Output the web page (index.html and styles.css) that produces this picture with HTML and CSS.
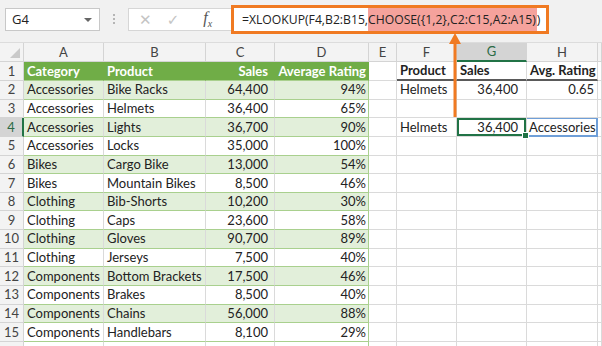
FILE: index.html
```html
<!DOCTYPE html>
<html lang="en">
<head>
  <meta charset="UTF-8">
  <title>XLOOKUP CHOOSE</title>
  <link rel="stylesheet" href="styles.css">
</head>
<body>

  <div class="toolbar">
    <div class="namebox">G4<span class="caret"></span></div>
    <div class="grip"><i></i><i></i><i></i></div>
    <div class="buttons">
      <span class="btn cancel">✕</span>
      <span class="btn enter">✓</span>
      <span class="btn fx">f<sub>x</sub></span>
    </div>
    <div class="formula">=XLOOKUP(F4,B2:B15,<span class="hl">CHOOSE({1,2},C2:C15,A2:A15)</span>)</div>
  </div>

  <svg class="arrow" width="14" height="84" viewBox="0 0 14 84">
    <polygon points="7,0 13,11 1,11" fill="#f07a22"/>
    <rect x="5.5" y="9" width="3" height="75" fill="#f07a22"/>
  </svg>

  <table class="sheet">
    <colgroup>
      <col class="w-row"><col class="w-a"><col class="w-b"><col class="w-c"><col class="w-d">
      <col class="w-e"><col class="w-f"><col class="w-g"><col class="w-h"><col>
    </colgroup>
    <thead>
      <tr>
        <th class="corner"><span class="tri"></span></th>
        <th>A</th><th>B</th><th>C</th><th>D</th><th>E</th><th>F</th><th class="active">G</th><th>H</th><th></th>
      </tr>
    </thead>
    <tbody>
      <tr class="top">
        <th>1</th><td>Category</td><td>Product</td><td class="n">Sales</td><td class="p">Average Rating</td>
        <td></td><td class="lh">Product</td><td class="lh">Sales</td><td class="lh">Avg. Rating</td><td></td>
      </tr>
      <tr class="band">
        <th>2</th><td>Accessories</td><td>Bike Racks</td><td class="n">64,400</td><td class="p">94%</td>
        <td></td><td class="f">Helmets</td><td class="g">36,400</td><td class="h">0.65</td><td></td>
      </tr>
      <tr>
        <th>3</th><td>Accessories</td><td>Helmets</td><td class="n">36,400</td><td class="p">65%</td>
        <td></td><td></td><td></td><td></td><td></td>
      </tr>
      <tr class="band">
        <th class="active">4</th><td>Accessories</td><td>Lights</td><td class="n">36,700</td><td class="p">90%</td>
        <td></td><td class="f">Helmets</td><td class="g sel">36,400</td><td class="spill">Accessories</td><td></td>
      </tr>
      <tr>
        <th>5</th><td>Accessories</td><td>Locks</td><td class="n">35,000</td><td class="p">100%</td>
        <td></td><td></td><td></td><td></td><td></td>
      </tr>
      <tr class="band">
        <th>6</th><td>Bikes</td><td>Cargo Bike</td><td class="n">13,000</td><td class="p">54%</td>
        <td></td><td></td><td></td><td></td><td></td>
      </tr>
      <tr>
        <th>7</th><td>Bikes</td><td>Mountain Bikes</td><td class="n">8,500</td><td class="p">46%</td>
        <td></td><td></td><td></td><td></td><td></td>
      </tr>
      <tr class="band">
        <th>8</th><td>Clothing</td><td>Bib-Shorts</td><td class="n">10,200</td><td class="p">30%</td>
        <td></td><td></td><td></td><td></td><td></td>
      </tr>
      <tr>
        <th>9</th><td>Clothing</td><td>Caps</td><td class="n">23,600</td><td class="p">58%</td>
        <td></td><td></td><td></td><td></td><td></td>
      </tr>
      <tr class="band">
        <th>10</th><td>Clothing</td><td>Gloves</td><td class="n">90,700</td><td class="p">89%</td>
        <td></td><td></td><td></td><td></td><td></td>
      </tr>
      <tr>
        <th>11</th><td>Clothing</td><td>Jerseys</td><td class="n">7,500</td><td class="p">40%</td>
        <td></td><td></td><td></td><td></td><td></td>
      </tr>
      <tr class="band">
        <th>12</th><td>Components</td><td>Bottom Brackets</td><td class="n">17,500</td><td class="p">46%</td>
        <td></td><td></td><td></td><td></td><td></td>
      </tr>
      <tr>
        <th>13</th><td>Components</td><td>Brakes</td><td class="n">8,500</td><td class="p">40%</td>
        <td></td><td></td><td></td><td></td><td></td>
      </tr>
      <tr class="band">
        <th>14</th><td>Components</td><td>Chains</td><td class="n">56,000</td><td class="p">88%</td>
        <td></td><td></td><td></td><td></td><td></td>
      </tr>
      <tr>
        <th>15</th><td>Components</td><td>Handlebars</td><td class="n">8,100</td><td class="p">29%</td>
        <td></td><td></td><td></td><td></td><td></td>
      </tr>
      <tr class="last">
        <th></th><td></td><td></td><td></td><td></td>
        <td></td><td></td><td></td><td></td><td></td>
      </tr>
    </tbody>
  </table>

</body>
</html>
```

FILE: styles.css
```css
body {
  margin: 0;
  width: 602px;
  height: 346px;
  overflow: hidden;
  background: #fff;
  font-family: Lato, "Liberation Sans", sans-serif;
  position: relative;
}

/* formula bar */
.toolbar {
  height: 43px;
  background: #f1f1f1;
  display: flex;
  align-items: flex-start;
  box-sizing: border-box;
  border-bottom: 1px solid #dcdcdc;
}
.namebox {
  margin: 8px 0 0 5px;
  width: 95px;
  height: 23px;
  box-sizing: border-box;
  background: #fff;
  border: 1px solid #c8c8c8;
  font: 13px "Open Sans", sans-serif;
  color: #222;
  line-height: 21px;
  padding-left: 6px;
  position: relative;
}
.caret {
  position: absolute;
  right: 7px;
  top: 9px;
  border-left: 4px solid transparent;
  border-right: 4px solid transparent;
  border-top: 4px solid #666;
}
.grip {
  width: 28px;
  display: flex;
  flex-direction: column;
  align-items: center;
  gap: 2px;
  padding-top: 14px;
}
.grip i {
  width: 2px;
  height: 2px;
  background: #b5b5b5;
}
.buttons {
  margin-top: 8px;
  width: 103px;
  height: 23px;
  box-sizing: border-box;
  background: #fff;
  border: 1px solid #d6d6d6;
  border-right: none;
  display: flex;
  align-items: center;
  padding-left: 10px;
}
.btn {
  width: 35px;
  font: 15px "DejaVu Sans", sans-serif;
  color: #c4c4c4;
}
.btn.fx {
  font: italic 16px "Liberation Serif", serif;
  color: #555;
  padding-left: 9px;
}
.btn.fx sub { font-size: 10px; }
.formula {
  margin-top: 5px;
  width: 318px;
  height: 29px;
  box-sizing: border-box;
  background: #fff;
  border: 3px solid #f07a22;
  font: 12.2px "Open Sans", sans-serif;
  color: #222;
  line-height: 23px;
  padding-left: 8px;
  white-space: nowrap;
  overflow: hidden;
}
.hl {
  background: #f5a29c;
  display: inline-block;
  padding-right: 1px;
}

.arrow {
  position: absolute;
  left: 448px;
  top: 33px;
}

/* grid */
.sheet {
  border-collapse: separate;
  border-spacing: 0;
  table-layout: fixed;
  width: 602px;
  font-size: 13px;
  color: #222;
}
.w-row { width: 24px; }
.w-a { width: 80px; }
.w-b { width: 102px; }
.w-c { width: 69px; }
.w-d { width: 94px; }
.w-e { width: 28px; }
.w-f { width: 60px; }
.w-g { width: 70px; }
.w-h { width: 71px; }

.sheet th,
.sheet td {
  box-sizing: border-box;
  padding: 0 0 0 3px;
  border-right: 1px solid #dadada;
  border-bottom: 1px solid #dadada;
  white-space: nowrap;
  overflow: hidden;
  height: 18.65px;
  line-height: 17px;
}
.sheet thead th {
  height: 17px;
  background: #f3f3f3;
  font-weight: normal;
  color: #444;
  text-align: center;
  padding: 0;
  border-color: #d4d4d4;
}
.sheet tbody th {
  background: #f3f3f3;
  font-weight: normal;
  color: #444;
  text-align: center;
  padding: 0;
  border-color: #d4d4d4;
}
.sheet thead th.active {
  background: #d4d4d4;
  color: #2b6a45;
  border-bottom: 2px solid #217346;
}
.sheet tbody th.active {
  background: #d4d4d4;
  color: #2b6a45;
  border-right: 2px solid #217346;
}
.corner { position: relative; }
.tri {
  position: absolute;
  right: 3px;
  bottom: 3px;
  border-left: 10px solid transparent;
  border-bottom: 10px solid #c9c9c9;
}

/* data table A:D */
.sheet tbody tr td:nth-child(-n+5) { border-bottom-color: #a9d08e; }
.sheet tbody tr td:nth-child(5) { border-right-color: #a9d08e; }
.sheet tr.band td:nth-child(-n+5) { background: #e2efda; }
.sheet tr.top td:nth-child(-n+5) {
  background: #70ad47;
  color: #fff;
  font-weight: bold;
  border-right-color: #70ad47;
}
.sheet tr.last td { border-bottom: none; }
.sheet tr.last th { border-bottom: none; }
.sheet td.n { text-align: right; padding: 0 6px 0 0; }
.sheet td.p { text-align: right; padding: 0 2px 0 0; }

/* lookup result F:H */
.sheet td.lh {
  font-weight: bold;
  border-bottom: 2px solid #5a5a5a;
}
.sheet td.g { text-align: right; padding: 0 8px 0 0; }
.sheet td.h { text-align: right; padding: 0 3px 0 0; }
.sheet td.sel {
  position: relative;
  box-shadow: inset 0 0 0 2px #217346;
  overflow: visible;
}
.sheet td.sel::after {
  content: "";
  position: absolute;
  right: -3px;
  bottom: -3px;
  width: 5px;
  height: 5px;
  background: #217346;
  border: 1px solid #fff;
}
.sheet td.spill {
  padding-left: 2px;
  box-shadow: inset 0 1px 0 #6f9fd8, inset -1px 0 0 #6f9fd8, inset 0 -1px 0 #6f9fd8;
  border-color: #6f9fd8;
}
```
